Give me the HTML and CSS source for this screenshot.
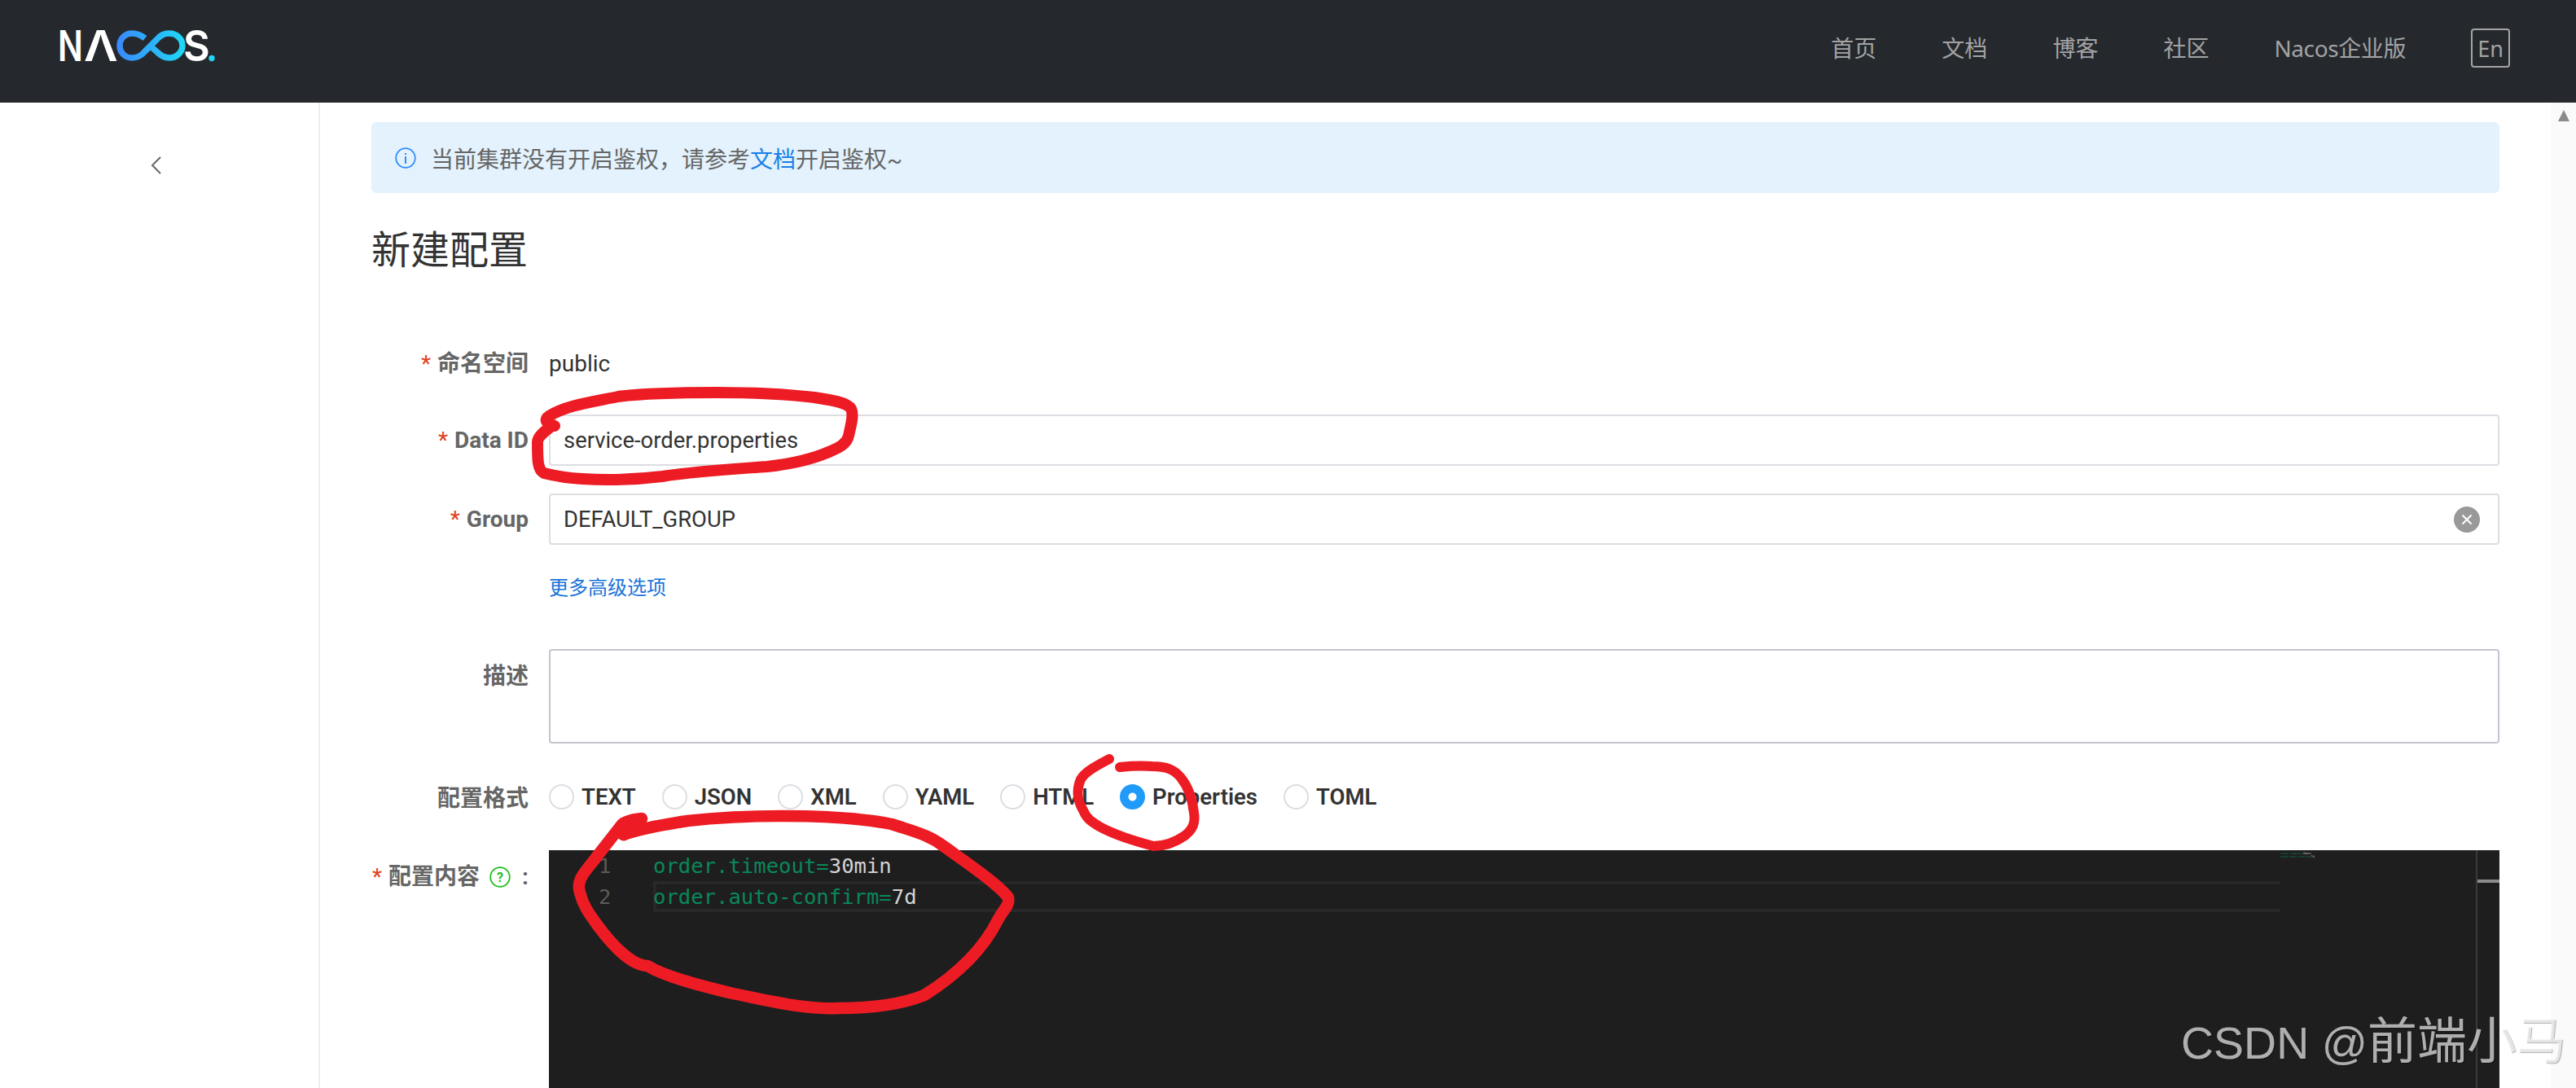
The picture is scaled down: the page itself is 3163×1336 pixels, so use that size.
FILE: index.html
```html
<!DOCTYPE html>
<html lang="zh">
<head>
<meta charset="utf-8">
<title>Nacos</title>
<link rel="stylesheet" href="styles.css">
</head>
<body>
<header class="topbar">
  <svg class="logo" width="200" height="100" viewBox="0 0 200 100" aria-label="NACOS.">
    <defs>
      <linearGradient id="inf" gradientUnits="userSpaceOnUse" x1="76" x2="153" y1="0" y2="0">
        <stop offset="0" stop-color="#3a8bff"/>
        <stop offset="1" stop-color="#1fd6f5"/>
      </linearGradient>
    </defs>
    <text class="logo-letter" transform="translate(0 62) scale(.78 1)">N</text>
    <text class="logo-letter" transform="translate(32 62) scale(1.1 1)">Λ</text>
    <path d="M107 34 C102 30 97 28 91 28 C82 28 76 35 76 43 C76 51 82 58 91 58 C97 58 103 55 107 50 L122 35 C126 30 131 28 137 28 C146 28 153 35 153 43 C153 51 146 58 137 58 C131 58 126 55 122 51 L113 43" fill="none" stroke="url(#inf)" stroke-width="7.5"/>
    <text class="logo-letter" transform="translate(154 62) scale(.97 1)">S</text>
    <circle cx="189" cy="58.5" r="3.7" fill="#1fd6f5"/>
  </svg>
  <nav class="topnav">
    <a class="navlink">首页</a>
    <a class="navlink">文档</a>
    <a class="navlink">博客</a>
    <a class="navlink">社区</a>
    <a class="navlink navlink-tight">Nacos企业版</a>
    <a class="langbtn">En</a>
  </nav>
</header>

<div class="shell">
  <aside class="sidebar">
    <svg class="back" width="14" height="22" viewBox="0 0 14 22"><path d="M12 1 L2 11 L12 21" fill="none" stroke="#666" stroke-width="2"/></svg>
  </aside>

  <main class="main">
    <div class="alert">
      <svg class="alert-icon" width="26" height="26" viewBox="0 0 26 26"><circle cx="13" cy="13" r="11.8" fill="none" stroke="#2f8cff" stroke-width="1.8"/><rect x="12" y="11" width="2" height="9" fill="#2f8cff"/><rect x="12" y="7" width="2" height="2" fill="#2f8cff"/></svg>
      <span>当前集群没有开启鉴权，请参考<a class="alert-link">文档</a>开启鉴权~</span>
    </div>

    <h1 class="title">新建配置</h1>

    <div class="form">
      <div class="row row-ns">
        <label class="lab"><span class="req">*</span>命名空间</label>
        <div class="plain">public</div>
      </div>
      <div class="row row-input">
        <label class="lab"><span class="req">*</span>Data ID</label>
        <div class="input">service-order.properties</div>
      </div>
      <div class="row row-input">
        <label class="lab"><span class="req">*</span>Group</label>
        <div class="input">DEFAULT_GROUP
          <svg class="clear" width="32" height="32" viewBox="0 0 32 32"><circle cx="16" cy="16" r="16" fill="#999"/><path d="M10.5 10.5 L21.5 21.5 M21.5 10.5 L10.5 21.5" stroke="#fff" stroke-width="2"/></svg>
        </div>
      </div>
      <div class="row row-more">
        <span class="lab"></span>
        <a class="more">更多高级选项</a>
      </div>
      <div class="row row-desc">
        <label class="lab">描述</label>
        <div class="textarea"></div>
      </div>
      <div class="row row-format">
        <label class="lab lab-format">配置格式</label>
        <div class="radios">
          <span class="radio"><i class="dot"></i>TEXT</span>
          <span class="radio"><i class="dot"></i>JSON</span>
          <span class="radio"><i class="dot"></i>XML</span>
          <span class="radio"><i class="dot"></i>YAML</span>
          <span class="radio"><i class="dot"></i>HTML</span>
          <span class="radio"><i class="dot dot-on"></i>Properties</span>
          <span class="radio"><i class="dot"></i>TOML</span>
        </div>
      </div>
      <div class="row row-editor">
        <label class="lab lab-help"><span class="req">*</span>配置内容
          <svg class="help" width="26" height="26" viewBox="0 0 26 26"><circle cx="13" cy="13" r="11.8" fill="none" stroke="#1dc11d" stroke-width="1.8"/><text class="help-q" x="13" y="19" text-anchor="middle">?</text></svg>
          <span class="colon">:</span>
        </label>
        <div class="editor">
          <div class="gutter"><div class="ln">1</div><div class="ln">2</div></div>
          <div class="code">
            <div class="line"><span class="k">order.timeout=</span><span class="v">30min</span></div>
            <div class="line line-on"><span class="k">order.auto-confirm=</span><span class="v">7d</span></div>
          </div>
          <div class="minimap">
            <div class="mini"><span class="k">order.timeout=</span><span class="v">30min</span></div>
            <div class="mini"><span class="k">order.auto-confirm=</span><span class="v">7d</span></div>
          </div>
          <div class="vscroll"><i class="vmark"></i></div>
        </div>
      </div>
    </div>
  </main>

  <div class="scrollbar"><i class="arrow"></i></div>
</div>

<svg class="ink" width="3163" height="1336" viewBox="0 0 3163 1336">
  <path class="ink-a" d="M681 523 C670 520 668 515 674 511 C695 498 725 494 759 487 C790 483 830 482 880 482 C925 482 965 484 1000 488 C1020 491 1040 494 1045 502 C1049 510 1044 525 1042 535 C1040 545 1030 550 1020 554 C1000 563 970 570 942 573 C900 576 860 578 813 585 C780 589 745 590 715 588 C695 587 680 584 668 581 C660 577 660 565 660 543 C660 536 668 530 679 522"/>
  <path class="ink-b" d="M1362 932 C1345 941 1332 948 1327 957 C1322 968 1322 982 1330 995 C1334 1005 1340 1009 1350 1015 C1370 1026 1395 1033 1416 1039 C1432 1039 1445 1033 1455 1026 C1465 1018 1468 1010 1466 998 C1464 980 1458 965 1450 955 C1442 945 1432 941 1415 941 C1400 940 1385 941 1375 942"/>
  <path class="ink-c" d="M788 1005 C780 1006 770 1007 764 1012 L728 1058 C714 1075 708 1083 712 1096 C716 1112 722 1120 735 1138 C750 1158 775 1186 795 1186 C815 1198 850 1208 900 1220 C950 1230 990 1240 1030 1238 C1075 1238 1110 1232 1135 1222 C1170 1200 1205 1170 1225 1130 C1233 1115 1240 1112 1238 1102 C1225 1085 1185 1058 1160 1040 C1140 1025 1125 1022 1095 1012 C1060 1005 1020 1002 960 1002 C920 1002 880 1004 844 1008 C820 1012 795 1015 768 1024"/>
  <path class="ink-blob" d="M766 1024 L772 1012 L786 1007"/>
</svg>

<div class="watermark"><span class="wm-lat">CSDN @</span><span class="wm-cjk">前端小马</span></div>
</body>
</html>
```

FILE: styles.css
```css
* { box-sizing: border-box; }
html, body { margin: 0; padding: 0; height: 100%; overflow: hidden; background: #fff; }
body { position: relative; font-family: Roboto, "Noto Sans CJK SC", sans-serif; font-size: 28px; color: #333; }

.topbar { height: 126px; background: #25292e; display: flex; align-items: center; justify-content: space-between; padding: 0 81px 0 71px; }
.logo { display: block; flex: none; }
.logo-letter { font-family: Inter, sans-serif; font-weight: 600; font-size: 52px; fill: #fff; }
.topnav { display: flex; align-items: center; gap: 80px; color: #a3a3a3; margin-top: -8px; }
.navlink { display: block; line-height: 40px; font-family: "Noto Sans", "Noto Sans CJK SC", sans-serif; font-size: 28px; }
.navlink-tight { letter-spacing: -0.4px; }
.langbtn { display: flex; width: 48px; height: 48px; align-items: center; justify-content: center; border: 2px solid #a3a3a3; border-radius: 4px; font-family: "Noto Sans", sans-serif; font-size: 27px; }

.shell { display: flex; height: 1210px; }
.sidebar { width: 393px; flex: none; border-right: 2px solid #eeeeee; display: flex; justify-content: center; padding: 66px 7px 0 0; align-items: flex-start; }
.back { display: block; }
.main { flex: 1; min-width: 0; padding: 24px 63px 0 63px; }
.scrollbar { width: 31px; flex: none; background: #fafafa; position: relative; display: flex; justify-content: center; padding-top: 9px; }
.arrow { display: block; width: 0; height: 0; border-left: 7px solid transparent; border-right: 7px solid transparent; border-bottom: 14px solid #8a8a8a; }

.alert { height: 87px; background: #e3f2fd; border-radius: 6px; display: flex; align-items: center; padding-left: 29px; gap: 18px; color: #666; }
.alert-icon { display: block; flex: none; }
.alert-link { color: #1a7fe6; }

.title { margin: 36px 0 0 0; font-weight: 400; font-size: 48px; line-height: 70px; height: 70px; color: #333; }

.form { display: flex; flex-direction: column; margin-top: 0; }
.row { display: grid; grid-template-columns: 193px 1fr; column-gap: 25px; align-items: center; }
.lab { display: block; text-align: right; font-weight: 700; color: #666; line-height: 40px; }
.req { color: #e0411f; font-weight: 400; margin-right: 8px; }
.row-ns { height: 40px; margin-top: 84px; }
.plain { color: #333; line-height: 40px; }
.row-input { height: 63px; margin-top: 42px; }
.row-input + .row-input { margin-top: 34px; }
.input { height: 63px; border: 2px solid #dcdee3; border-radius: 4px; padding: 0 16px; display: flex; align-items: center; justify-content: space-between; color: #333; font-size: 27.4px; }
.clear { display: block; margin-right: 6px; }
.row-more { height: 40px; margin-top: 31px; }
.more { font-family: "Noto Sans CJK SC", sans-serif; font-size: 24px; color: #1a73d9; line-height: 40px; }
.row-desc { margin-top: 57px; align-items: start; }
.row-desc .lab { margin-top: 14px; }
.textarea { height: 116px; border: 2px solid #c4c6cf; border-radius: 4px; }
.row-format { height: 40px; margin-top: 43px; }
.lab-format { padding-top: 5px; }
.radios { display: flex; gap: 32px; height: 38px; align-items: center; }
.radio { display: flex; align-items: center; gap: 9px; font-weight: 600; font-size: 27.5px; line-height: 38px; color: #333; }
.dot { display: block; width: 31px; height: 31px; border: 2px solid #dcdee3; border-radius: 50%; background: #fff; }
.dot-on { border: 0; background: radial-gradient(circle, #fff 0, #fff 4.5px, #209bfa 5.5px); }
.row-editor { margin-top: 48px; align-items: start; }
.lab-help { display: flex; align-items: center; justify-content: flex-end; margin-top: 13px; }
.help { display: block; margin-left: 12px; flex: none; }
.help-q { font-size: 16px; fill: #1dc11d; font-family: Roboto, sans-serif; }
.colon { margin: 0 0 0 14px; }

.editor { height: 292px; background: #1e1e1e; display: flex; overflow: hidden; font-family: "DejaVu Sans Mono", monospace; font-size: 25.6px; line-height: 38px; }
.gutter { width: 128px; flex: none; padding-left: 61px; color: #5a5a5a; }
.code { width: 1998px; flex: none; }
.line { height: 38px; line-height: 38px; white-space: pre; }
.line-on { box-shadow: inset 0 4px 0 #282828, inset 0 -4px 0 #282828, inset 4px 0 0 #282828; }
.k { color: #09885a; }
.v { color: #d4d4d4; }
.minimap { width: 240px; flex: none; padding-top: 2px; font-size: 3.3px; }
.mini { height: 4px; line-height: 4px; white-space: pre; }
.vscroll { flex: 1; border-left: 2px solid #3a3a3a; padding-top: 36px; }
.vmark { display: block; height: 4px; background: #8c8c8c; }

.ink { position: absolute; left: 0; top: 0; pointer-events: none; }
.ink path { fill: none; stroke: #ed1c24; stroke-linecap: round; stroke-linejoin: round; }
.ink-a { stroke-width: 14px; }
.ink-b { stroke-width: 12px; }
.ink-c { stroke-width: 14.5px; }
.ink-blob { stroke-width: 17px; }

.watermark { position: absolute; left: 2678px; top: 1241px; font-family: "Liberation Sans", "Noto Sans CJK SC", sans-serif; line-height: 76px; white-space: nowrap; color: rgba(255,255,255,.66); text-shadow: 1px 1px 1px rgba(0,0,0,.3); }
.wm-lat { font-size: 55.5px; }
.wm-cjk { font-size: 61px; }
```
